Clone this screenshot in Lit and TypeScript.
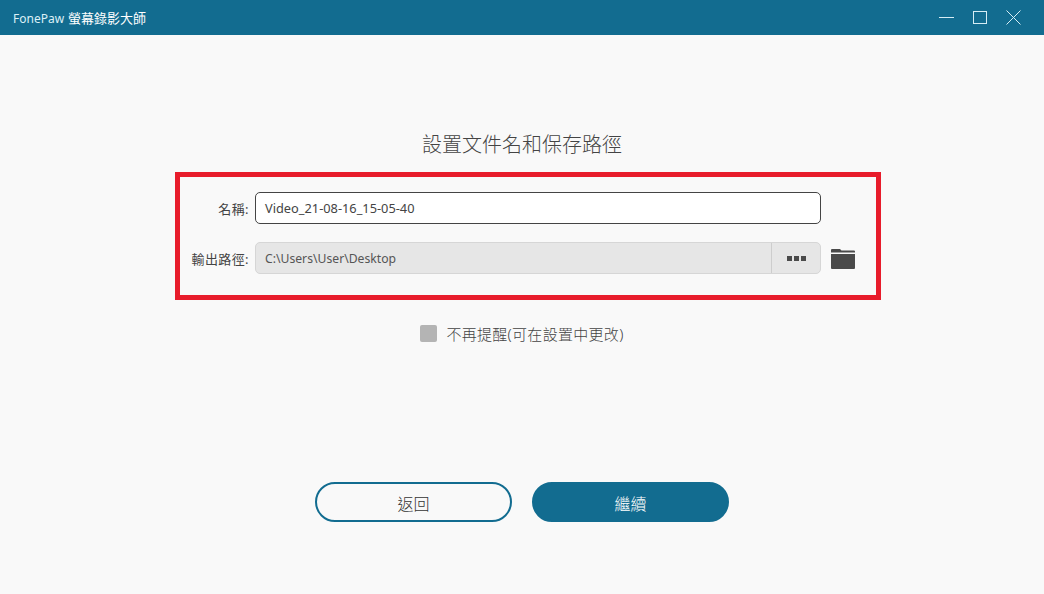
import { LitElement, html, css } from "lit";
import { customElement } from "lit/decorators.js";

@customElement("app-root")
export class AppRoot extends LitElement {
  static styles = css`
    :host {
      display: flex;
      flex-direction: column;
      width: 1044px;
      height: 594px;
      background: #f9f9f9;
      color: #444;
      font-family: "Noto Sans", "Noto Sans CJK TC", sans-serif;
      overflow: hidden;
    }
    .titlebar {
      height: 35px;
      flex: none;
      background: #126c90;
      display: flex;
      align-items: center;
      justify-content: space-between;
      padding: 0 23px 0 13px;
      color: #fff;
      font-size: 13px;
    }
    .brand { font-size: 12px; color: #dcf0f7; margin-right: 4px; }
    .controls { display: flex; align-items: center; gap: 19px; }
    .controls svg { display: block; stroke: #d5edf5; fill: none; stroke-width: 1; }
    main {
      flex: 1;
      display: flex;
      flex-direction: column;
      align-items: center;
    }
    h1 {
      margin: 96px 0 0;
      height: 28px;
      line-height: 28px;
      font-size: 20px;
      font-weight: 300;
      color: #444;
    }
    .box {
      box-sizing: border-box;
      width: 706px;
      height: 128px;
      margin: 13px 0 0 12px;
      border: 5px solid #e81c2b;
      padding: 15px 0 0;
      display: flex;
      flex-direction: column;
      gap: 18px;
    }
    .row { display: flex; align-items: center; }
    .label {
      width: 69px;
      text-align: right;
      font-size: 13px;
      letter-spacing: 0.4px;
      color: #444;
      margin-right: 6px;
      white-space: nowrap;
    }
    .field {
      box-sizing: border-box;
      width: 566px;
      height: 32px;
      border-radius: 5px;
      display: flex;
      align-items: center;
    }
    .name {
      background: #fff;
      border: 1px solid #444;
      padding-left: 9px;
      color: #444;
      font-size: 12.8px;
    }
    .path {
      background: #e6e6e6;
      border: 1px solid #d6d6d6;
      color: #555;
      font-size: 12.2px;
    }
    .path .value { flex: 1; padding-left: 9px; }
    .more {
      width: 48px;
      height: 100%;
      border-left: 1px solid #cdcdcd;
      display: flex;
      align-items: center;
      justify-content: center;
      gap: 2px;
    }
    .more i { width: 5px; height: 5px; background: #4a4a4a; display: block; }
    .folder { margin: 2px 0 0 10px; display: block; }
    .remind {
      display: flex;
      align-items: center;
      margin-top: 24px;
      height: 18px;
      font-size: 15px;
      font-weight: 300;
      letter-spacing: 0.3px;
      color: #444;
    }
    .check {
      width: 17px;
      height: 17px;
      border-radius: 2px;
      background: #b4b4b4;
      margin-right: 9px;
    }
    .buttons {
      display: flex;
      gap: 20px;
      margin-top: 140px;
    }
    .btn {
      box-sizing: border-box;
      width: 197px;
      height: 40px;
      border-radius: 20px;
      border: 2px solid #126c90;
      padding-top: 2px;
      display: flex;
      align-items: center;
      justify-content: center;
      font-size: 16px;
      font-weight: 300;
      color: #333;
    }
    .btn.primary { background: #126c90; color: #fff; }
  `;

  render() {
    return html`
      <header class="titlebar">
        <span><span class="brand">FonePaw</span>螢幕錄影大師</span>
        <div class="controls">
          <svg width="15" height="15" viewBox="0 0 15 15"><path d="M0 7.5H15" /></svg>
          <svg width="14" height="13" viewBox="0 0 14 13"><rect x="0.5" y="0.5" width="13" height="12" /></svg>
          <svg width="15" height="15" viewBox="0 0 15 15"><path d="M0.5 0.5L14.5 14.5M14.5 0.5L0.5 14.5" /></svg>
        </div>
      </header>
      <main>
        <h1>設置文件名和保存路徑</h1>
        <section class="box">
          <div class="row">
            <span class="label">名稱:</span>
            <div class="field name">Video_21-08-16_15-05-40</div>
          </div>
          <div class="row">
            <span class="label">輸出路徑:</span>
            <div class="field path">
              <span class="value">C:\\Users\\User\\Desktop</span>
              <span class="more"><i></i><i></i><i></i></span>
            </div>
            <svg class="folder" width="24" height="20" viewBox="0 0 24 20">
              <path fill="#4a4a4a" d="M1 0H9L10.5 1.5H23A1 1 0 0 1 24 2.5V3.5H0V1A1 1 0 0 1 1 0ZM0 5H24V19A1 1 0 0 1 23 20H1A1 1 0 0 1 0 19Z" />
            </svg>
          </div>
        </section>
        <div class="remind"><span class="check"></span><span>不再提醒(可在設置中更改)</span></div>
        <div class="buttons">
          <div class="btn">返回</div>
          <div class="btn primary">繼續</div>
        </div>
      </main>
    `;
  }
}
